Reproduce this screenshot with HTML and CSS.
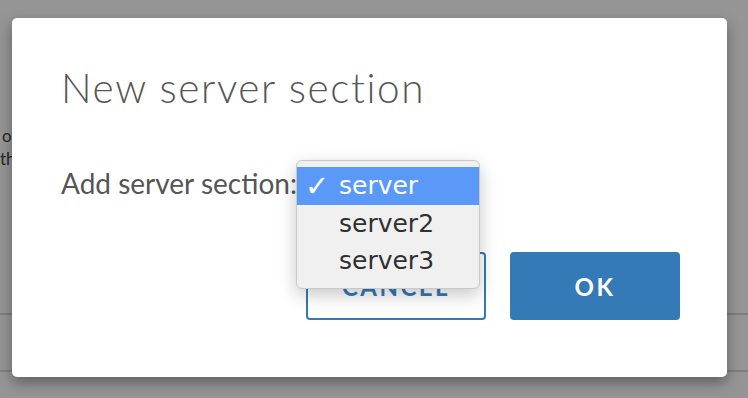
FILE: index.html
```html
<!DOCTYPE html>
<html lang="en">
<head>
    <meta charset="UTF-8">
    <title>New server section</title>
    <link rel="stylesheet" href="styles.css">
</head>
<body>
    <div id="page">
        <div class="page-text first">on</div>
        <div class="page-text">the</div>
        <div class="page-rule top"></div>
        <div class="page-rule bottom"></div>
    </div>
    <div id="backdrop"></div>
    <div id="modal">
        <h1 class="modal-title">New server section</h1>
        <div class="modal-body">
            <label class="field-label">Add server section:</label>
            <div class="select-menu">
                <div class="select-option selected"><span class="check">✓</span>server</div>
                <div class="select-option">server2</div>
                <div class="select-option">server3</div>
            </div>
        </div>
        <div class="modal-footer">
            <button class="btn btn-cancel">CANCEL</button>
            <button class="btn btn-ok">OK</button>
        </div>
    </div>
</body>
</html>
```
FILE: styles.css
```css
body, html {
    margin: 0;
    padding: 0;
    height: 100%;
    overflow: hidden;
    font-family: Lato, "Open Sans", sans-serif;
}
#page {
    height: 100%;
    background-color: #fff;
    padding-top: 124px;
    box-sizing: border-box;
}
.page-text {
    font-size: 17px;
    line-height: 23px;
    color: #444;
}
.page-text.first {
    padding-left: 2px;
}
.page-rule {
    height: 2px;
    background-color: #d8d8d8;
}
.page-rule.top {
    margin-top: 143px;
}
.page-rule.bottom {
    margin-top: 55px;
}
#backdrop {
    position: absolute;
    inset: 0;
    background-color: rgba(0, 0, 0, 0.415);
}
#modal {
    position: absolute;
    left: 12px;
    top: 18px;
    width: 715px;
    height: 359px;
    background-color: #fff;
    border-radius: 5px;
    box-shadow: 0 6px 14px rgba(0, 0, 0, 0.35);
    padding: 0 47px 0 49px;
    box-sizing: border-box;
    display: flex;
    flex-direction: column;
}
.modal-title {
    margin: 47px 0 0 0;
    font-size: 40.5px;
    line-height: 46px;
    font-weight: 300;
    color: #565656;
    letter-spacing: 1.6px;
}
.modal-body {
    position: relative;
    margin-top: 57px;
    height: 30px;
}
.field-label {
    font-size: 28px;
    line-height: 30px;
    color: #555;
}
.select-menu {
    position: absolute;
    left: 235px;
    top: -8px;
    width: 184px;
    padding: 6px 0 9px 0;
    background-color: #f0f0f0;
    border: 1px solid #c9c9c9;
    border-radius: 6px;
    box-shadow: 0 6px 18px rgba(0, 0, 0, 0.22);
    box-sizing: border-box;
    z-index: 5;
    font-family: "DejaVu Sans", Verdana, sans-serif;
}
.select-option {
    height: 37px;
    line-height: 37px;
    padding-left: 42px;
    font-size: 25px;
    color: #303030;
    position: relative;
}
.select-option.selected {
    background-color: #5b99f8;
    color: #fff;
    height: 38px;
    line-height: 38px;
}
.check {
    position: absolute;
    left: 8px;
    top: 0;
    font-size: 29px;
    font-weight: bold;
}
.modal-footer {
    display: flex;
    justify-content: flex-end;
    gap: 24px;
    margin-top: 54px;
}
.btn {
    height: 68px;
    font-family: Lato, sans-serif;
    font-size: 24px;
    font-weight: 700;
    letter-spacing: 2.5px;
    border-radius: 4px;
    cursor: pointer;
}
.btn-cancel {
    width: 180px;
    background-color: #fff;
    color: #337ab7;
    border: 2px solid #337ab7;
}
.btn-ok {
    width: 170px;
    background-color: #337ab7;
    color: #fff;
    border: none;
}
```
